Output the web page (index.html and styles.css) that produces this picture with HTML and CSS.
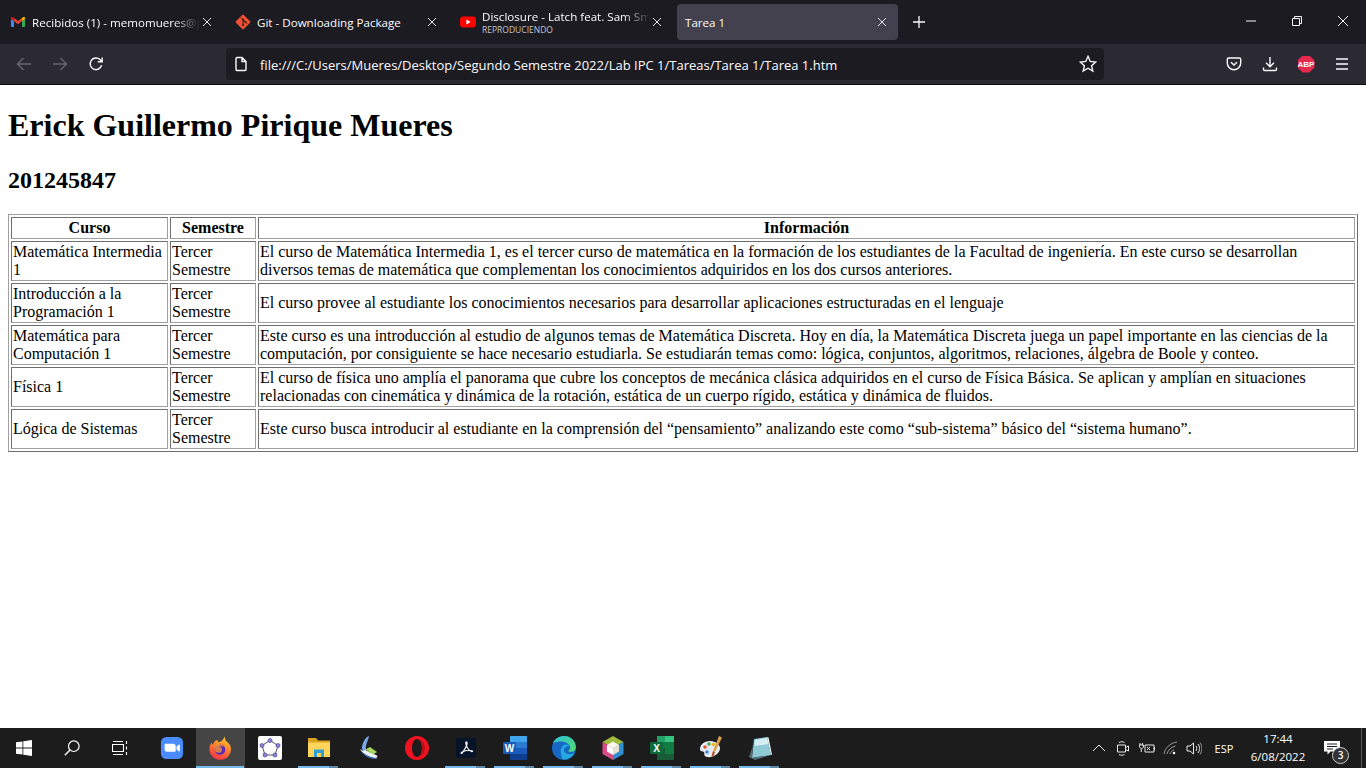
FILE: index.html
```html
<!DOCTYPE html>
<html lang="es">
<head>
<meta charset="utf-8">
<title>Tarea 1</title>
<link rel="stylesheet" href="styles.css">
</head>
<body>
<div class="app">
  <header class="chrome">
    <div class="tabbar">
      <div class="tabs">
        <div class="tab">
          <svg class="favicon" viewBox="-1 -1 18 18"><path fill="#4285f4" d="M1 13.5h2.5V7L0 4.5v8a1 1 0 0 0 1 1z"/><path fill="#34a853" d="M12.5 13.5H15a1 1 0 0 0 1-1v-8L12.5 7z"/><path fill="#ea4335" d="M3.5 7V3.5L8 7l4.5-3.5V7L8 10.4z"/><path fill="#fbbc04" d="M12.5 3.5V7L16 4.5v-.8c0-1.2-1.4-1.9-2.4-1.1z"/><path fill="#c5221f" d="M0 4.5 3.5 7V3.5l-1.1-.9C1.4 1.8 0 2.5 0 3.7z"/></svg>
          <span class="tab-title fade">Recibidos (1) - memomueres@g</span>
          <svg class="tab-close" viewBox="0 0 10 10"><path d="M1 1l8 8M9 1l-8 8"/></svg>
        </div>
        <div class="tab">
          <svg class="favicon" viewBox="0 0 16 16"><rect x="2.4" y="2.4" width="11.2" height="11.2" rx="1.2" transform="rotate(45 8 8)" fill="#f05033"/><path d="M6 3.6l6.2 6.2M8 5.6v5M8 5.6l2.2 2.2" stroke="#3a1c18" stroke-width="1" fill="none"/><circle cx="8" cy="11" r="1.1" fill="#3a1c18"/><circle cx="8" cy="5.6" r="1.1" fill="#3a1c18"/><circle cx="10.4" cy="8" r="1.1" fill="#3a1c18"/></svg>
          <span class="tab-title">Git - Downloading Package</span>
          <svg class="tab-close" viewBox="0 0 10 10"><path d="M1 1l8 8M9 1l-8 8"/></svg>
        </div>
        <div class="tab">
          <svg class="favicon" viewBox="0 0 16 16"><rect x="0" y="2.4" width="16" height="11.2" rx="3" fill="#f00"/><path d="M6.4 5.6 10.6 8l-4.2 2.4z" fill="#fff"/></svg>
          <span class="tab-stack">
            <span class="tab-title fade">Disclosure - Latch feat. Sam Smi</span>
            <span class="tab-sub">REPRODUCIENDO</span>
          </span>
          <svg class="tab-close" viewBox="0 0 10 10"><path d="M1 1l8 8M9 1l-8 8"/></svg>
        </div>
        <div class="tab active">
          <span class="tab-title">Tarea 1</span>
          <svg class="tab-close" viewBox="0 0 10 10"><path d="M1 1l8 8M9 1l-8 8"/></svg>
        </div>
        <svg class="new-tab" viewBox="0 0 14 14"><path d="M7 1v12M1 7h12"/></svg>
      </div>
      <div class="winctl">
        <div class="winbtn"><svg viewBox="0 0 12 12"><path d="M1 6h10"/></svg></div>
        <div class="winbtn"><svg viewBox="0 0 12 12"><path d="M1.5 3.5h7v7h-7zM3.5 3.5v-2h7v7h-2"/></svg></div>
        <div class="winbtn"><svg viewBox="0 0 12 12"><path d="M1 1l10 10M11 1 1 11"/></svg></div>
      </div>
    </div>
    <div class="toolbar">
      <div class="navs">
        <div class="tool dim"><svg viewBox="0 0 16 16"><path d="M15 8H1.5M7.5 2 1.5 8l6 6"/></svg></div>
        <div class="tool dim"><svg viewBox="0 0 16 16"><path d="M1 8h13.5M8.5 2l6 6-6 6"/></svg></div>
        <div class="tool"><svg viewBox="0 0 16 16"><path d="M13.6 9.2A5.8 5.8 0 1 1 12 3.6L14 5.6M14.2 1.4v4.4H9.8"/></svg></div>
      </div>
      <div class="urlbar">
        <svg class="doc" viewBox="0 0 16 16"><path d="M3 2.6c0-.6.5-1.1 1.1-1.1H9L13 5.5v8c0 .6-.5 1-1.1 1H4.1C3.5 14.500 3 14 3 13.400zM9 1.500v4h4"/></svg>
        <span class="url">file:///C:/Users/Mueres/Desktop/Segundo Semestre 2022/Lab IPC 1/Tareas/Tarea 1/Tarea 1.htm</span>
        <svg class="star" viewBox="0 0 16 16"><path d="M8 1.200l2 4.500 4.900.5-3.700 3.300 1.100 4.800L8 11.800l-4.300 2.500 1.100-4.800L1.100 6.200 6 5.700z"/></svg>
      </div>
      <div class="actions">
        <div class="tool"><svg viewBox="0 0 16 16"><path d="M2.600 2h10.800c.8 0 1.300.6 1.300 1.300V7A6.700 6.700 0 0 1 1.300 7V3.300C1.300 2.600 1.800 2 2.600 2zM5 6.200l3 2.900 3-2.900"/></svg></div>
        <div class="tool"><svg viewBox="0 0 16 16"><path d="M8 1v9.500M4 6.800l4 4 4-4M1.500 11.500v1.700c0 .7.500 1.300 1.200 1.300h10.600c.7 0 1.200-.6 1.200-1.300v-1.700"/></svg></div>
        <div class="tool"><div class="abp">ABP</div></div>
        <div class="tool"><svg viewBox="0 0 16 16"><path d="M2 3h12M2 8h12M2 13h12"/></svg></div>
      </div>
    </div>
  </header>

  <main class="page">
    <h1>Erick Guillermo Pirique Mueres</h1>
    <h2>201245847</h2>
    <table class="courses">
      <thead>
        <tr><th class="c1">Curso</th><th class="c2">Semestre</th><th>Información</th></tr>
      </thead>
      <tbody>
        <tr><td>Matemática Intermedia 1</td><td>Tercer Semestre</td><td>El curso de Matemática Intermedia 1, es el tercer curso de matemática en la formación de los estudiantes de la Facultad de ingeniería. En este curso se desarrollan diversos temas de matemática que complementan los conocimientos adquiridos en los dos cursos anteriores.</td></tr>
        <tr><td>Introducción a la Programación 1</td><td>Tercer Semestre</td><td>El curso provee al estudiante los conocimientos necesarios para desarrollar aplicaciones estructuradas en el lenguaje</td></tr>
        <tr><td>Matemática para Computación 1</td><td>Tercer Semestre</td><td>Este curso es una introducción al estudio de algunos temas de Matemática Discreta. Hoy en día, la Matemática Discreta juega un papel importante en las ciencias de la computación, por consiguiente se hace necesario estudiarla. Se estudiarán temas como: lógica, conjuntos, algoritmos, relaciones, álgebra de Boole y conteo.</td></tr>
        <tr><td>Física 1</td><td>Tercer Semestre</td><td>El curso de física uno amplía el panorama que cubre los conceptos de mecánica clásica adquiridos en el curso de Física Básica. Se aplican y amplían en situaciones relacionadas con cinemática y dinámica de la rotación, estática de un cuerpo rígido, estática y dinámica de fluidos.</td></tr>
        <tr><td>Lógica de Sistemas</td><td>Tercer Semestre</td><td>Este curso busca introducir al estudiante en la comprensión del “pensamiento” analizando este como “sub-sistema” básico del “sistema humano”.</td></tr>
      </tbody>
    </table>
  </main>

  <footer class="taskbar">
    <div class="tb-sys">
      <svg viewBox="0 0 16 16"><path fill="#fff" d="M0 2.300 6.500 1.400v6.200H0zM7.300 1.300 16 0v7.600H7.300zM0 8.400h6.500v6.200L0 13.700zM7.300 8.400H16V16l-8.700-1.300z"/></svg>
    </div>
    <div class="tb-sys">
      <svg viewBox="0 0 16 16"><circle cx="9.800" cy="6.200" r="5.300" fill="none" stroke="#fff" stroke-width="1.200"/><path d="M6 10 .8 15.200" stroke="#fff" stroke-width="1.400"/></svg>
    </div>
    <div class="tb-sys">
      <svg viewBox="0 0 16 16"><path fill="none" stroke="#fff" stroke-width="1.100" d="M.5 4.500h11v7H.5zM1 1.500h10M1 14.500h10M14.500 1v3M14.500 6.500v3M14.500 12v3"/></svg>
    </div>
    <div class="tb-app first">
      <svg viewBox="-1 -1 26 26"><rect width="24" height="24" rx="6" fill="#4a8cff"/><path fill="#fff" d="M4 8.500c0-.6.500-1 1-1h8.500c1.400 0 2.500 1.100 2.500 2.500v5c0 .6-.5 1-1 1H6.500A2.500 2.500 0 0 1 4 13.500zM17 10.500l2.600-2.200c.4-.3.900 0 .9.400v6.600c0 .5-.5.700-.9.400L17 13.500z"/></svg>
    </div>
    <div class="tb-app active">
      <svg viewBox="0 0 24 24"><defs><linearGradient id="ffg" x1="0.700" y1="0" x2="0.300" y2="1"><stop offset="0" stop-color="#ffc926"/><stop offset="0.500" stop-color="#ff7a30"/><stop offset="1" stop-color="#f0304a"/></linearGradient></defs><path fill="url(#ffg)" d="M15.500 .5c1 2.500 .5 3.500 2 5 2 1.500 4.500 3.500 4.500 7.500a10.800 10.800 0 0 1-21.600 0c0-2.800 1-5 2.300-6.500 0 1 .5 1.800 1.300 2.200C4.500 6 7 3.800 9 4.500c-.5 1 0 1.500 1 1.500 1.500.2 4.500-2 5.500-5.500z"/><circle cx="11" cy="13.500" r="5.300" fill="#5b2bb5"/><path fill="#ff9a2e" d="M6.500 9.500c3-2.500 7-1.500 8 1.500-2-1-3-1-4 0 1.500 0 3 1.500 2.500 3.500-1 3-5 3-7 .5-.5-2 0-4 .5-5.500z" opacity=".75"/></svg>
    </div>
    <div class="tb-app">
      <svg viewBox="0 0 24 24"><rect width="24" height="24" rx="2" fill="#fff"/><path d="M12 4.500 20 9.500 17 19H7L4 9.500z" fill="none" stroke="#555" stroke-width="1"/><g fill="#8d86d8" stroke="#4a4590" stroke-width=".7"><circle cx="12" cy="4.500" r="2"/><circle cx="20" cy="9.500" r="2"/><circle cx="17" cy="19" r="2"/><circle cx="7" cy="19" r="2"/><circle cx="4" cy="9.500" r="2"/></g></svg>
    </div>
    <div class="tb-app running">
      <svg viewBox="0 0 24 24"><path fill="#d9a21f" d="M1 2h8l2 2.500h12V8H1z"/><path fill="#ffd65c" d="M1 6.500h22V21H1z"/><path fill="#2f9fd8" d="M7 21v-7.500h10V21h-3v-4h-4v4z"/></svg>
    </div>
    <div class="tb-app">
      <svg viewBox="0 0 24 24"><path fill="#7aa6ea" d="M13 0c-3 1-6 5-7 11-.3 2 .5 3.500 2 4.500l2.500-1.500c-1-1.500-1-3 0-6 .7-2.500 2-5 2.500-8z"/><path fill="#eef2f6" d="M4 13c2 4 7 8 14 9 3 .3 4-1 3-2.500L9 14l-2 1z"/><path fill="#a6d85e" d="M9.500 13.500 14 11l7 5-4 2.500z"/><path fill="#3f6fb0" d="M4 14c3 5 9 9 15 9 1.500 0 2.500-.5 3-1.500-1 .5-2 .5-3.500.2C13 20.700 8 18 4 14z"/></svg>
    </div>
    <div class="tb-app">
      <svg viewBox="0 0 24 24"><path fill="#f0131f" fill-rule="evenodd" d="M12 0a12 12 0 1 1 0 24 12 12 0 0 1 0-24zm0 3c-3 0-5 4-5 9s2 9 5 9 5-4 5-9-2-9-5-9z"/><path fill="#b80c18" d="M12 3c3 0 5 4 5 9s-2 9-5 9c4 0 8-4 8-9s-4-9-8-9z"/></svg>
    </div>
    <div class="tb-app running">
      <svg viewBox="0 0 24 24"><rect x="2" y="2" width="20" height="20" rx="2" fill="#061329"/><path d="M12.500 6c-.5 0-.8.400-.7 1 .4 3 2.700 7 5.700 8.500.9.400 1.500-.4.600-.7-3-.6-7-.2-10 1.200-1.200.6-1.300 1.600-.5 1.400C10 15.500 13.800 8 13 6.500c-.1-.3-.3-.5-.5-.5z" fill="none" stroke="#f2f2f2" stroke-width="1.300"/></svg>
    </div>
    <div class="tb-app running">
      <svg viewBox="0 0 24 24"><path fill="#2b7cd3" d="M7 0h17v24H7z"/><path fill="#41a5ee" d="M7 0h17v6H7z"/><path fill="#185abd" d="M7 12h17v6H7z"/><path fill="#103f91" d="M7 18h17v6H7z"/><rect x="0" y="6" width="13" height="12" rx="1" fill="#1a5bb8"/><text x="6.500" y="15.500" class="icon-letter">W</text></svg>
    </div>
    <div class="tb-app running">
      <svg viewBox="0 0 24 24"><defs><linearGradient id="edg" x1="0" y1="0" x2="1" y2="1"><stop offset="0" stop-color="#2fc3d8"/><stop offset="1" stop-color="#52d96e"/></linearGradient></defs><circle cx="12" cy="12" r="12" fill="#1668c4"/><path fill="url(#edg)" d="M1 7C4 0 13-2 19 2c4 3 6 8 4 12-1 2-5 2.500-7 1 2-1 3-3 1.500-5.500C15 5 7 4.500 1 7z"/><path fill="#26a8e0" d="M9 17c-1-4 1-8 5-8.500 2 0 3 1 3.500 2-1-.5-3-.5-4.500 1-1.500 1.500-1.500 4 .5 5.500 3 2 7 1.500 9-.5-1.500 4-6 7-11 7-1 0-2-2-2.500-6.500z"/></svg>
    </div>
    <div class="tb-app running">
      <svg viewBox="0 0 24 24"><path fill="#9dbb3c" d="M12 0l10.500 6L12 12 1.500 6z"/><path fill="#d84c86" d="M1.500 6 12 12v12L1.500 18z"/><path fill="#2f8fd0" d="M22.500 6 12 12v12l10.500-6z"/><path fill="#fbf7ea" d="M12 5.500l6 3.500-6 3.500L6 9z"/><path fill="#fff" d="M6 9l6 3.500v6.500l-6-3.500z"/><path fill="#e8e4cf" d="M18 9l-6 3.500v6.500l6-3.500z"/></svg>
    </div>
    <div class="tb-app running">
      <svg viewBox="0 0 24 24"><path fill="#21a366" d="M7 0h17v6H7z"/><path fill="#107c41" d="M7 6h17v6H7z"/><path fill="#33c481" d="M15 0h9v6h-9z"/><path fill="#185c37" d="M7 12h17v12H7z"/><path fill="#107c41" d="M15 12h9v6h-9z"/><rect x="0" y="6" width="13" height="12" rx="1" fill="#0e6a38"/><text x="6.500" y="15.500" class="icon-letter">X</text></svg>
    </div>
    <div class="tb-app running">
      <svg viewBox="0 0 24 24"><path fill="#e6ecf2" d="M11 5C5 5 1 9 1 13c0 3 3 2 4 3 1 2-1 4 3 5 6 1 12-3 13-8 .5-4-4-8-10-8z"/><circle cx="6" cy="11" r="1.800" fill="#e2572f"/><circle cx="10" cy="8" r="1.800" fill="#46b04a"/><circle cx="14.500" cy="8.500" r="1.800" fill="#e9b42a"/><circle cx="8" cy="16" r="1.800" fill="#3f88d8"/><path fill="#d9a24a" d="M20 0l3 1.500L16 16l-2-1z"/><path fill="#c04a2a" d="M14 15l2 1-1.500 4.500-2-.5z"/></svg>
    </div>
    <div class="tb-app running">
      <svg viewBox="0 0 24 24"><path fill="#8fc9d6" d="M6 3 19 1l4 18-19 3z"/><path fill="#d4eef2" d="M7 4 19 2l1.500 6-14 2z"/><path fill="#f4f8f8" d="M19 1l1.500 .5 3.500 17-1 .5z"/><path fill="#5f7f88" d="M1 21 5 9l-1 13 19-3-16 5z" opacity=".8"/></svg>
    </div>

    <div class="tray">
      <div class="tray-slot"><svg viewBox="0 0 16 16"><path d="M2 11l6-6 6 6"/></svg></div>
      <div class="tray-slot"><svg viewBox="0 0 16 16"><path d="M2.500 5h8v7h-8zM10.500 7.500l3-1.500v5l-3-1.500M4 2.500c2-1 4-1 5.500 0M4 14.500c2 1 4 1 5.500 0"/></svg></div>
      <div class="tray-slot"><svg viewBox="0 0 16 16"><path d="M1 3v2M3.500 3v2M0 5h4.500v2L2.500 9 .5 7zM2.250 9v3M6 5h9v7H6zM8 7l3 3M11 7l-3 3M15.500 7v3"/></svg></div>
      <div class="tray-slot"><svg viewBox="0 0 16 16"><path class="soft" d="M1 14C2 8 7 3 14 2M4 14c1-4 4-7 8.500-8M7 14c.5-2 2-3.500 4-4"/><circle class="dot" cx="11" cy="13" r="1.300"/></svg></div>
      <div class="tray-slot narrow"><svg viewBox="0 0 16 16"><path d="M1 6h3l3.500-3v11L4 11H1zM10 6c1 1.500 1 3.500 0 5M12 4c2 2.500 2 6.500 0 9"/><path class="soft" d="M14 2.500c2.500 3.500 2.500 8.500 0 12"/></svg></div>
      <div class="tray-lang">ESP</div>
      <div class="clock"><span>17:44</span><span>6/08/2022</span></div>
      <div class="notif">
        <svg viewBox="0 0 16 16"><path fill="#fff" d="M0 1h16v10.500H6.500L3.500 14.500v-3H0z"/><path stroke="#1c1c1c" stroke-width="1" d="M3 4h10M3 6.500h10M3 9h6"/></svg>
        <span class="badge">3</span>
      </div>
      <div class="show-desktop"></div>
    </div>
  </footer>
</div>
</body>
</html>
```

FILE: styles.css
```css
* { box-sizing: border-box; }
html, body { margin: 0; padding: 0; height: 100%; overflow: hidden; }
body { background: #fff; color: #000; font-family: "Liberation Serif", "Times New Roman", serif; font-size: 16px; }
.app { display: flex; flex-direction: column; height: 768px; width: 1366px; }

/* Browser chrome */
.chrome { flex: 0 0 85px; display: flex; flex-direction: column; font-family: "Open Sans", "Noto Sans", sans-serif; color: #fbfbfe; border-bottom: 1px solid #0c0c0d; }
.tabbar { flex: 0 0 44px; display: flex; background: #1c1b22; }
.tabs { flex: 1; display: flex; gap: 4px; padding: 4px 0 4px 2px; align-items: stretch; }
.tab { width: 221px; display: flex; align-items: center; padding: 0 11px 0 8px; border-radius: 4px; }
.tab.active { background: #42414d; }
.favicon { width: 16px; height: 16px; flex: none; margin-right: 6px; }
.tab-title { display: block; flex: 1; min-width: 0; font-size: 11.6px; line-height: 15px; white-space: nowrap; }
.tab-stack { flex: 1; min-width: 0; display: flex; flex-direction: column; }
.tab-stack .tab-title { flex: none; }
.tab-sub { font-size: 8.5px; line-height: 11px; color: #c4c4c9; white-space: nowrap; }
.fade { -webkit-mask-image: linear-gradient(to right, #000 84%, transparent 100%); mask-image: linear-gradient(to right, #000 84%, transparent 100%); }
.tab-close { width: 10px; height: 10px; flex: none; margin-left: 2px; fill: none; stroke: #e4e4e8; stroke-width: 1; }
.new-tab { width: 14px; height: 14px; align-self: center; margin-left: 10px; fill: none; stroke: #fbfbfe; stroke-width: 1.3; }
.winctl { display: flex; }
.winbtn { width: 46px; display: flex; align-items: center; justify-content: center; padding-bottom: 2px; }
.winbtn svg { width: 12px; height: 12px; fill: none; stroke: #f5f5f5; stroke-width: 1; }

.toolbar { flex: 1; display: flex; align-items: center; background: #2b2a33; padding: 0 6px; }
.navs { display: flex; width: 220px; }
.tool { width: 36px; height: 32px; display: flex; align-items: center; justify-content: center; }
.tool svg { width: 16px; height: 16px; fill: none; stroke: #fbfbfe; stroke-width: 1.4; }
.tool.dim svg { stroke: #66656d; }
.urlbar { width: 878px; height: 32px; background: #1c1b22; border-radius: 4px; display: flex; align-items: center; padding: 0 7px; }
.doc { width: 16px; height: 16px; flex: none; fill: none; stroke: #fbfbfe; stroke-width: 1.4; }
.url { flex: 1; margin-left: 11px; padding-top: 1px; font-size: 13px; white-space: nowrap; color: #fbfbfe; }
.star { width: 18px; height: 18px; flex: none; fill: none; stroke: #fbfbfe; stroke-width: 1.2; }
.actions { display: flex; margin-left: 112px; }
.abp { width: 17px; height: 17px; background: #e8294f; color: #fff; font: bold 8px/17px "Liberation Sans", sans-serif; text-align: center; clip-path: polygon(30% 0, 70% 0, 100% 30%, 100% 70%, 70% 100%, 30% 100%, 0 70%, 0 30%); }

/* Page */
.page { flex: 1; min-height: 0; padding: 0 8px; overflow: hidden; background: #fff; }
h1 { font-size: 32px; font-weight: bold; margin: 22.44px 0; }
h2 { font-size: 24px; font-weight: bold; margin: 19.92px 0 20.5px; }
.courses { width: 100%; border-collapse: separate; border-spacing: 2px; border: 1px solid; border-color: #a0a0a0 #6e6e6e #6e6e6e #a0a0a0; }
.courses th, .courses td { border: 1px solid; border-color: #6e6e6e #a0a0a0 #a0a0a0 #6e6e6e; padding: 1px; line-height: 18px; }
.courses .c1 { width: 157px; }
.courses .c2 { width: 86px; }

/* Taskbar */
.taskbar { flex: 0 0 40px; display: flex; background: #1c1c1c; color: #fff; font-family: "Open Sans", "Noto Sans", sans-serif; }
.tb-sys { width: 48px; display: flex; align-items: center; justify-content: center; }
.tb-sys svg { width: 16px; height: 16px; }
.tb-app { width: 49px; position: relative; display: flex; align-items: center; justify-content: center; }
.tb-app.first { margin-left: 3px; }
.tb-app svg { width: 24px; height: 24px; }
.tb-app.active { background: #454545; }
.tb-app.active::after { content: ""; position: absolute; left: 0; right: 1px; bottom: 0; height: 2px; background: #76b9ed; }
.tb-app.running::after { content: ""; position: absolute; left: 4px; width: 40px; bottom: 0; height: 2px; background: linear-gradient(to right, #76b9ed 78%, #5d88a8 78%); }
.icon-letter { font: bold 10px "Liberation Sans", sans-serif; fill: #fff; text-anchor: middle; }
.tray { margin-left: auto; display: flex; align-items: center; height: 100%; }
.tray-slot { width: 24px; display: flex; justify-content: center; }
.tray-slot.narrow { width: 22px; }
.tray-slot svg { width: 16px; height: 16px; fill: none; stroke: #e8e8e8; stroke-width: 1; }
.tray-slot .soft { stroke: #9a9a9a; }
.tray-slot .dot { fill: #fff; stroke: none; }
.tray-lang { width: 38px; text-align: center; font-size: 11px; }
.clock { width: 70px; display: flex; flex-direction: column; align-items: center; font-size: 11.5px; line-height: 18px; }
.notif { width: 40px; position: relative; display: flex; justify-content: center; }
.notif svg { width: 16px; height: 16px; margin-right: 2px; }
.badge { position: absolute; left: 19px; top: 7px; width: 17px; height: 17px; border-radius: 50%; background: #333; border: 1px solid #ccc; font-size: 10px; line-height: 15px; text-align: center; font-weight: 600; }
.show-desktop { width: 13px; height: 100%; position: relative; }
.show-desktop::before { content: ""; position: absolute; left: 8px; top: 0; bottom: 0; width: 1px; background: #5a5a5a; }
```
